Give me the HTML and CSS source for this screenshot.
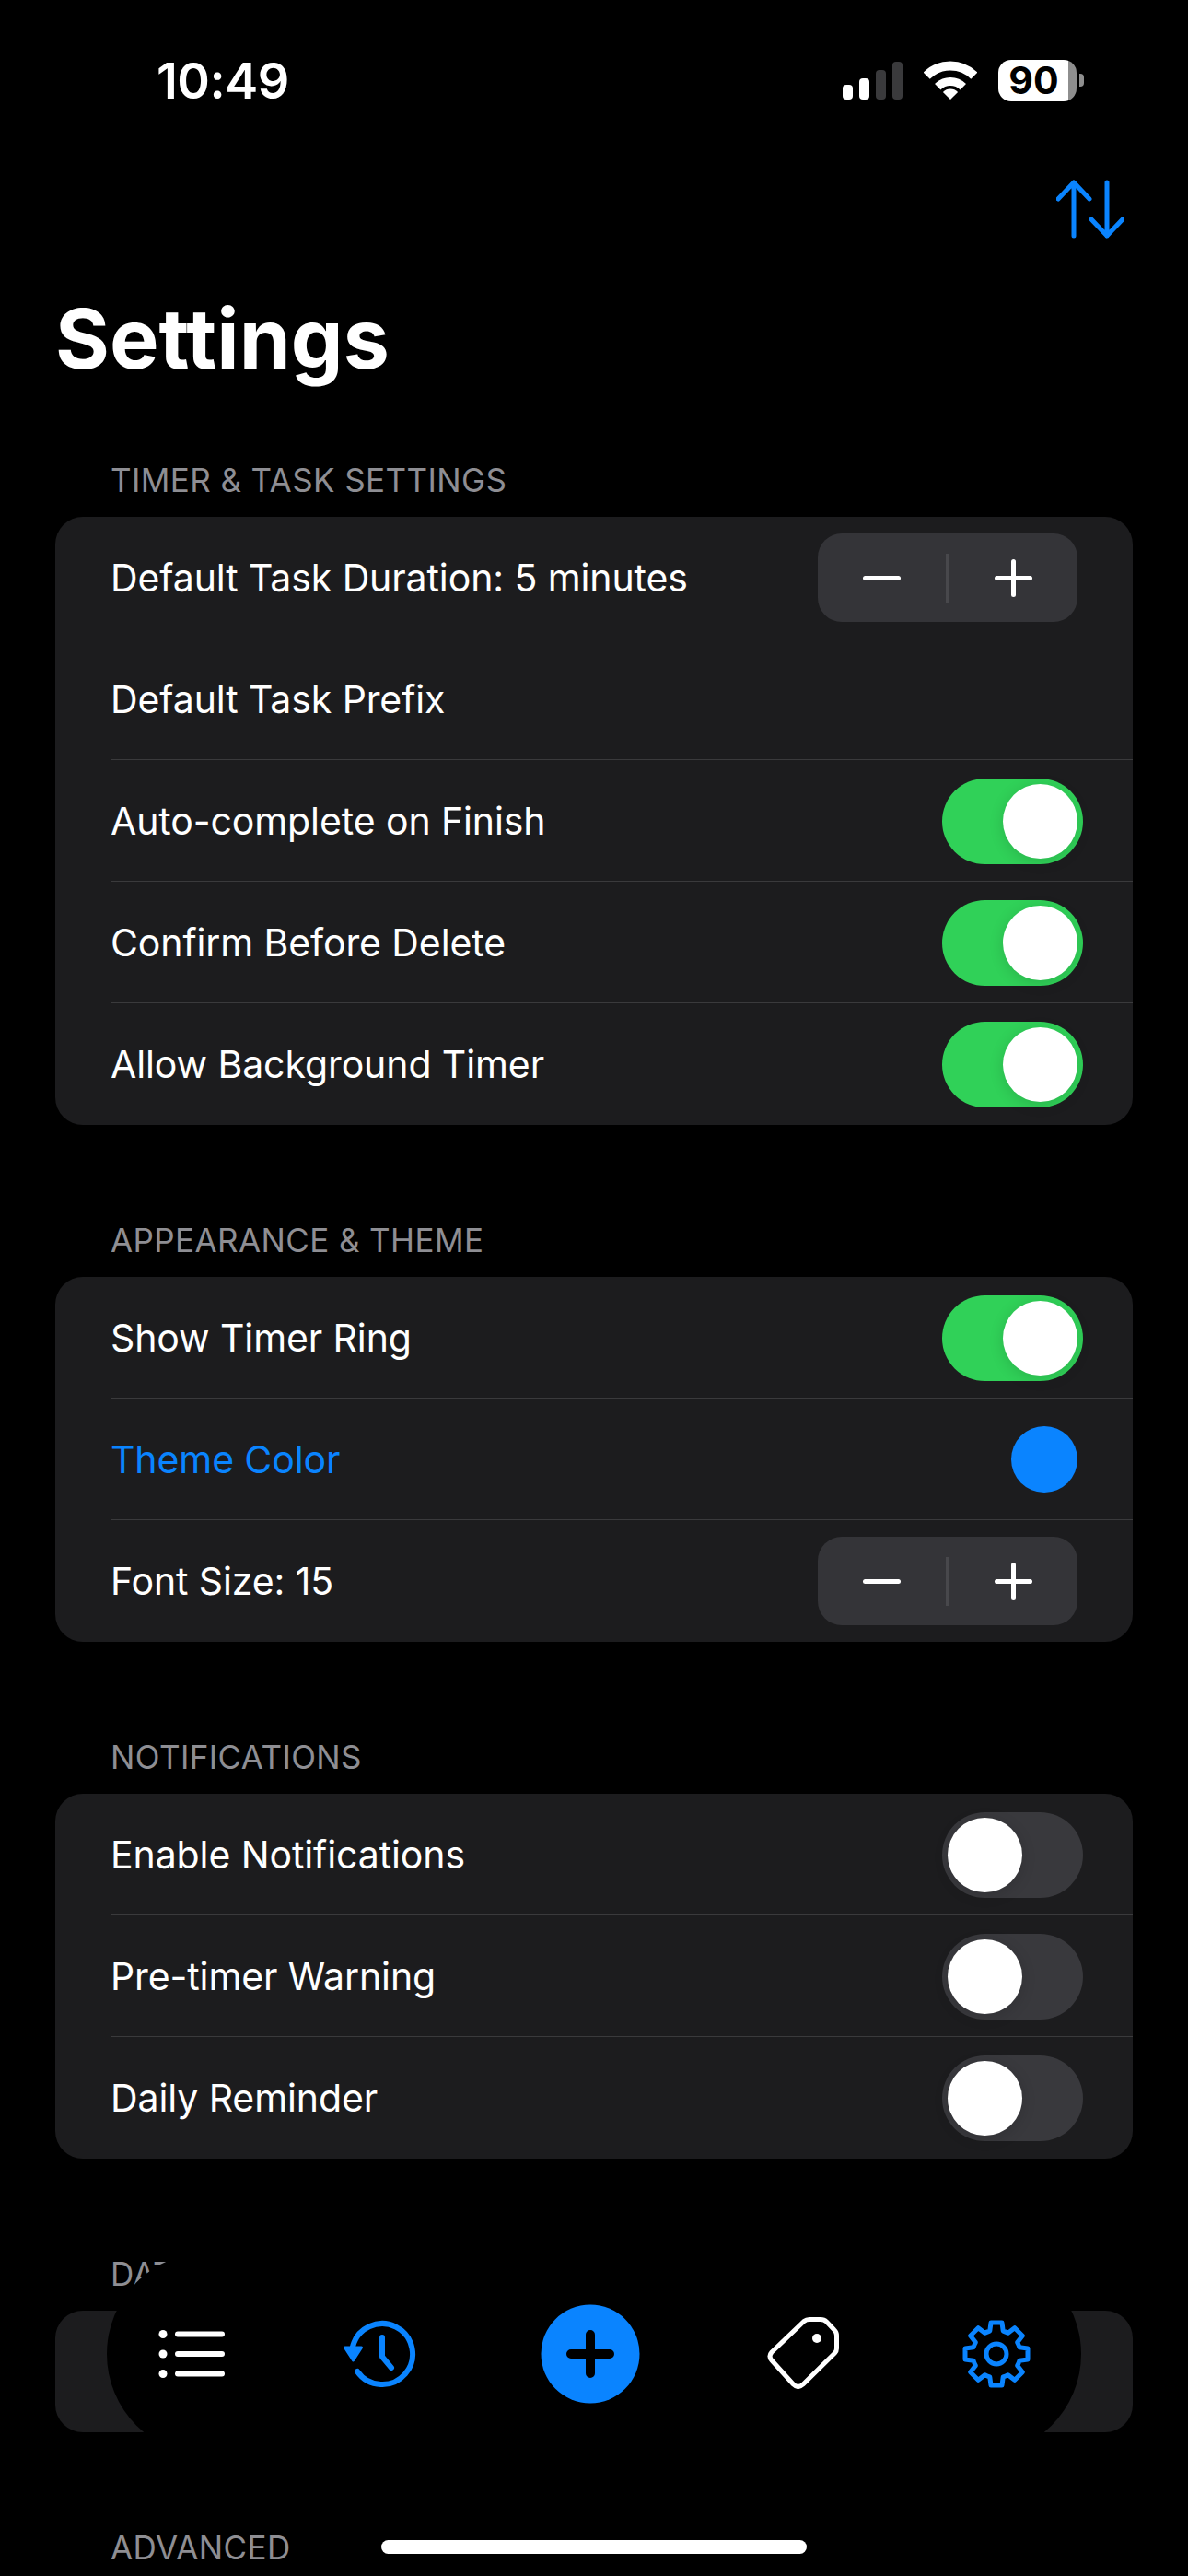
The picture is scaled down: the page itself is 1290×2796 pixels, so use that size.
FILE: index.html
```html
<!DOCTYPE html>
<html lang="en">
<head>
    <meta charset="UTF-8">
    <title>Settings</title>
    <link rel="stylesheet" href="styles.css">
</head>
<body>
    <div class="screen">
        <!-- Status bar -->
        <div class="status-bar">
            <span class="time">10:49</span>
            <div class="status-icons">
                <div class="signal">
                    <span class="bar bar-1"></span>
                    <span class="bar bar-2"></span>
                    <span class="bar bar-3"></span>
                    <span class="bar bar-4"></span>
                </div>
                <svg class="wifi" width="58" height="44" viewBox="0 0 58 44">
                    <path d="M3.2 17.2 A36.5 36.5 0 0 1 54.8 17.2" fill="none" stroke="#fff" stroke-width="10"/>
                    <path d="M15.2 29.2 A19.5 19.5 0 0 1 42.8 29.2" fill="none" stroke="#fff" stroke-width="9"/>
                    <path d="M29 43 L20.9 34.9 A11.5 11.5 0 0 1 37.1 34.9 Z" fill="#fff"/>
                </svg>
                <div class="battery">
                    <div class="battery-body"><span>90</span></div>
                    <div class="battery-nub"></div>
                </div>
            </div>
        </div>

        <div class="toolbar">
            <svg width="74" height="64" viewBox="0 0 74 64" fill="none" stroke="#0a84ff" stroke-width="5" stroke-linecap="round" stroke-linejoin="round">
                <path d="M19 61 V3 M2 21 L19 3 L36 21"/>
                <path d="M55 3 V61 M38 43 L55 61 L72 43"/>
            </svg>
        </div>

        <h1 class="title">Settings</h1>

        <div class="section-list">
            <section class="section">
                <h3 class="section-title">Timer &amp; Task Settings</h3>
                <div class="card">
                    <div class="row">
                        <span>Default Task Duration: 5 minutes</span>
                        <div class="stepper">
                            <span class="step-minus"></span>
                            <span class="step-line"></span>
                            <span class="step-plus"></span>
                        </div>
                    </div>
                    <div class="row"><span>Default Task Prefix</span></div>
                    <div class="row"><span>Auto-complete on Finish</span><div class="toggle on"><span class="knob"></span></div></div>
                    <div class="row"><span>Confirm Before Delete</span><div class="toggle on"><span class="knob"></span></div></div>
                    <div class="row"><span>Allow Background Timer</span><div class="toggle on"><span class="knob"></span></div></div>
                </div>
            </section>

            <section class="section">
                <h3 class="section-title">Appearance &amp; Theme</h3>
                <div class="card">
                    <div class="row"><span>Show Timer Ring</span><div class="toggle on"><span class="knob"></span></div></div>
                    <div class="row"><span class="link">Theme Color</span><span class="color-dot"></span></div>
                    <div class="row">
                        <span>Font Size: 15</span>
                        <div class="stepper">
                            <span class="step-minus"></span>
                            <span class="step-line"></span>
                            <span class="step-plus"></span>
                        </div>
                    </div>
                </div>
            </section>

            <section class="section">
                <h3 class="section-title">Notifications</h3>
                <div class="card">
                    <div class="row"><span>Enable Notifications</span><div class="toggle"><span class="knob"></span></div></div>
                    <div class="row"><span>Pre-timer Warning</span><div class="toggle"><span class="knob"></span></div></div>
                    <div class="row"><span>Daily Reminder</span><div class="toggle"><span class="knob"></span></div></div>
                </div>
            </section>

            <section class="section">
                <h3 class="section-title">Data</h3>
                <div class="card">
                    <div class="row"><span>Export Tasks</span></div>
                </div>
            </section>

            <section class="section">
                <h3 class="section-title">Advanced</h3>
            </section>
        </div>

        <!-- Barra flotante -->
        <nav class="tab-bar">
            <svg width="80" height="80" viewBox="0 0 80 80" fill="#fff">
                <circle cx="12" cy="18.5" r="4.5"/>
                <circle cx="12" cy="40" r="4.5"/>
                <circle cx="12" cy="61.5" r="4.5"/>
                <path d="M28 18.5 H76 M28 40 H76 M28 61.5 H76" stroke="#fff" stroke-width="6" stroke-linecap="round"/>
            </svg>
            <svg width="80" height="80" viewBox="0 0 80 80" fill="none" stroke="#0a84ff" stroke-width="6" stroke-linecap="round" stroke-linejoin="round">
                <path d="M9.8 33 A33 33 0 1 1 15 59"/>
                <path d="M42 22 V43 L52 55"/>
                <path d="M1.5 33 H19.5 L10.5 47 Z" fill="#0a84ff" stroke-width="3"/>
            </svg>
            <svg width="120" height="108" viewBox="0 0 120 108">
                <circle cx="60" cy="54" r="53.5" fill="#0a84ff"/>
                <path d="M39 54 H81 M60 33 V75" stroke="#000" stroke-width="10" stroke-linecap="round"/>
            </svg>
            <svg width="86" height="96" viewBox="0 0 86 96" fill="none" stroke="#fff" stroke-width="5" stroke-linejoin="round">
                <path d="M50 10.5 H62 Q66 10.5 68.5 13 L77 22 Q79.5 24.5 79.5 28 V42 Q79.5 45 77.5 47 L43 81 Q37.5 86 32.5 81 L9 55 Q5 50.5 9 46 L44 12.5 Q46.5 10.5 50 10.5 Z"/>
                <circle cx="58" cy="31" r="5" fill="#fff" stroke="none"/>
            </svg>
            <svg width="80" height="80" viewBox="-39 -40 80 80" fill="none" stroke="#0a84ff" stroke-width="5" stroke-linejoin="round">
                <path d="M-7.2 -25 L-6 -34 L6 -34 L7.2 -25 A26 26 0 0 1 12.6 -22.7 L19.8 -28.3 L28.3 -19.8 L22.7 -12.6 A26 26 0 0 1 25 -7.2 L34 -6 L34 6 L25 7.2 A26 26 0 0 1 22.7 12.6 L28.3 19.8 L19.8 28.3 L12.6 22.7 A26 26 0 0 1 7.2 25 L6 34 L-6 34 L-7.2 25 A26 26 0 0 1 -12.6 22.7 L-19.8 28.3 L-28.3 19.8 L-22.7 12.6 A26 26 0 0 1 -25 7.2 L-34 6 L-34 -6 L-25 -7.2 A26 26 0 0 1 -22.7 -12.6 L-28.3 -19.8 L-19.8 -28.3 L-12.6 -22.7 A26 26 0 0 1 -7.2 -25 Z"/>
                <circle cx="0" cy="0" r="11"/>
            </svg>
        </nav>

        <div class="home-indicator"></div>
    </div>
</body>
</html>
```

FILE: styles.css
```css
* { box-sizing: border-box; }
body {
    margin: 0;
    background: #000;
    color: #fff;
    font-family: Inter, "Noto Sans", sans-serif;
}
.screen {
    position: relative;
    width: 1290px;
    height: 2796px;
    overflow: hidden;
    background: #000;
}

/* Status bar */
.status-bar {
    height: 174px;
    padding: 0 113px 0 170px;
    display: flex;
    justify-content: space-between;
    align-items: center;
}
.time { font-size: 54px; font-weight: 600; letter-spacing: -0.5px; }
.status-icons { display: flex; align-items: center; gap: 23px; }
.signal { display: flex; align-items: flex-end; gap: 7px; height: 41px; }
.bar { width: 11px; border-radius: 4px; background: #fff; }
.bar-1 { height: 16px; }
.bar-2 { height: 23px; }
.bar-3 { height: 32px; background: #3a3a3c; }
.bar-4 { height: 41px; background: #3a3a3c; }
.battery { display: flex; align-items: center; gap: 3px; }
.battery-body {
    width: 85px;
    height: 45px;
    border-radius: 14px;
    background: linear-gradient(90deg, #fff 90%, #8e8e8e 90%);
    color: #000;
    font-size: 41px;
    font-weight: 700;
    display: flex;
    align-items: center;
    justify-content: center;
    padding-right: 8px;
}
.battery-nub { width: 5px; height: 14px; border-radius: 0 4px 4px 0; background: #8e8e8e; }

.toolbar {
    height: 106px;
    padding-right: 69px;
    display: flex;
    justify-content: flex-end;
    align-items: center;
}

.title {
    margin: 28px 0 0 60px;
    font-size: 90px;
    line-height: 120px;
    font-weight: 700;
}

/* Secciones */
.section-list {
    margin-top: 71px;
    display: flex;
    flex-direction: column;
    gap: 103px;
}
.section-title {
    margin: 0 0 18px 120px;
    font-size: 35px;
    line-height: 44px;
    font-weight: 400;
    letter-spacing: 0.4px;
    color: #8e8e93;
    text-transform: uppercase;
}
.card {
    margin: 0 60px;
    background: #1c1c1e;
    border-radius: 30px;
}
.row {
    height: 132px;
    margin-left: 60px;
    padding-right: 60px;
    display: flex;
    justify-content: space-between;
    align-items: center;
    font-size: 41px;
    letter-spacing: -0.1px;
    box-shadow: inset 0 -1px 0 #3a3a3c;
}
.row:last-child { box-shadow: none; }
.link { color: #0a84ff; }
.color-dot { width: 72px; height: 72px; border-radius: 50%; background: #0a84ff; }

/* Stepper */
.stepper {
    width: 282px;
    height: 96px;
    border-radius: 26px;
    background: #343438;
    display: flex;
    align-items: center;
    padding-left: 49px;
}
.step-minus { width: 41px; height: 5px; border-radius: 3px; background: #fff; }
.step-line { width: 3px; height: 53px; margin: 0 50px 0 49px; background: #48484c; }
.step-plus { position: relative; width: 41px; height: 5px; border-radius: 3px; background: #fff; }
.step-plus::after {
    content: "";
    position: absolute;
    left: 18px;
    top: -18px;
    width: 5px;
    height: 41px;
    border-radius: 3px;
    background: #fff;
}

/* Toggle */
.toggle {
    width: 153px;
    height: 93px;
    margin-right: -6px;
    padding: 6px;
    border-radius: 47px;
    background: #39393d;
    display: flex;
}
.toggle.on { background: #30d158; justify-content: flex-end; }
.knob {
    width: 81px;
    height: 81px;
    border-radius: 50%;
    background: #fff;
    box-shadow: 0 3px 16px rgba(0,0,0,0.14);
}

/* Barra flotante */
.tab-bar {
    position: absolute;
    left: 116px;
    top: 2445px;
    width: 1058px;
    height: 220px;
    padding-left: 49px;
    border-radius: 110px;
    background: #000;
    display: flex;
    align-items: center;
    gap: 128px;
}
.home-indicator {
    position: absolute;
    left: 414px;
    top: 2757px;
    width: 462px;
    height: 15px;
    border-radius: 8px;
    background: #fff;
}
```
